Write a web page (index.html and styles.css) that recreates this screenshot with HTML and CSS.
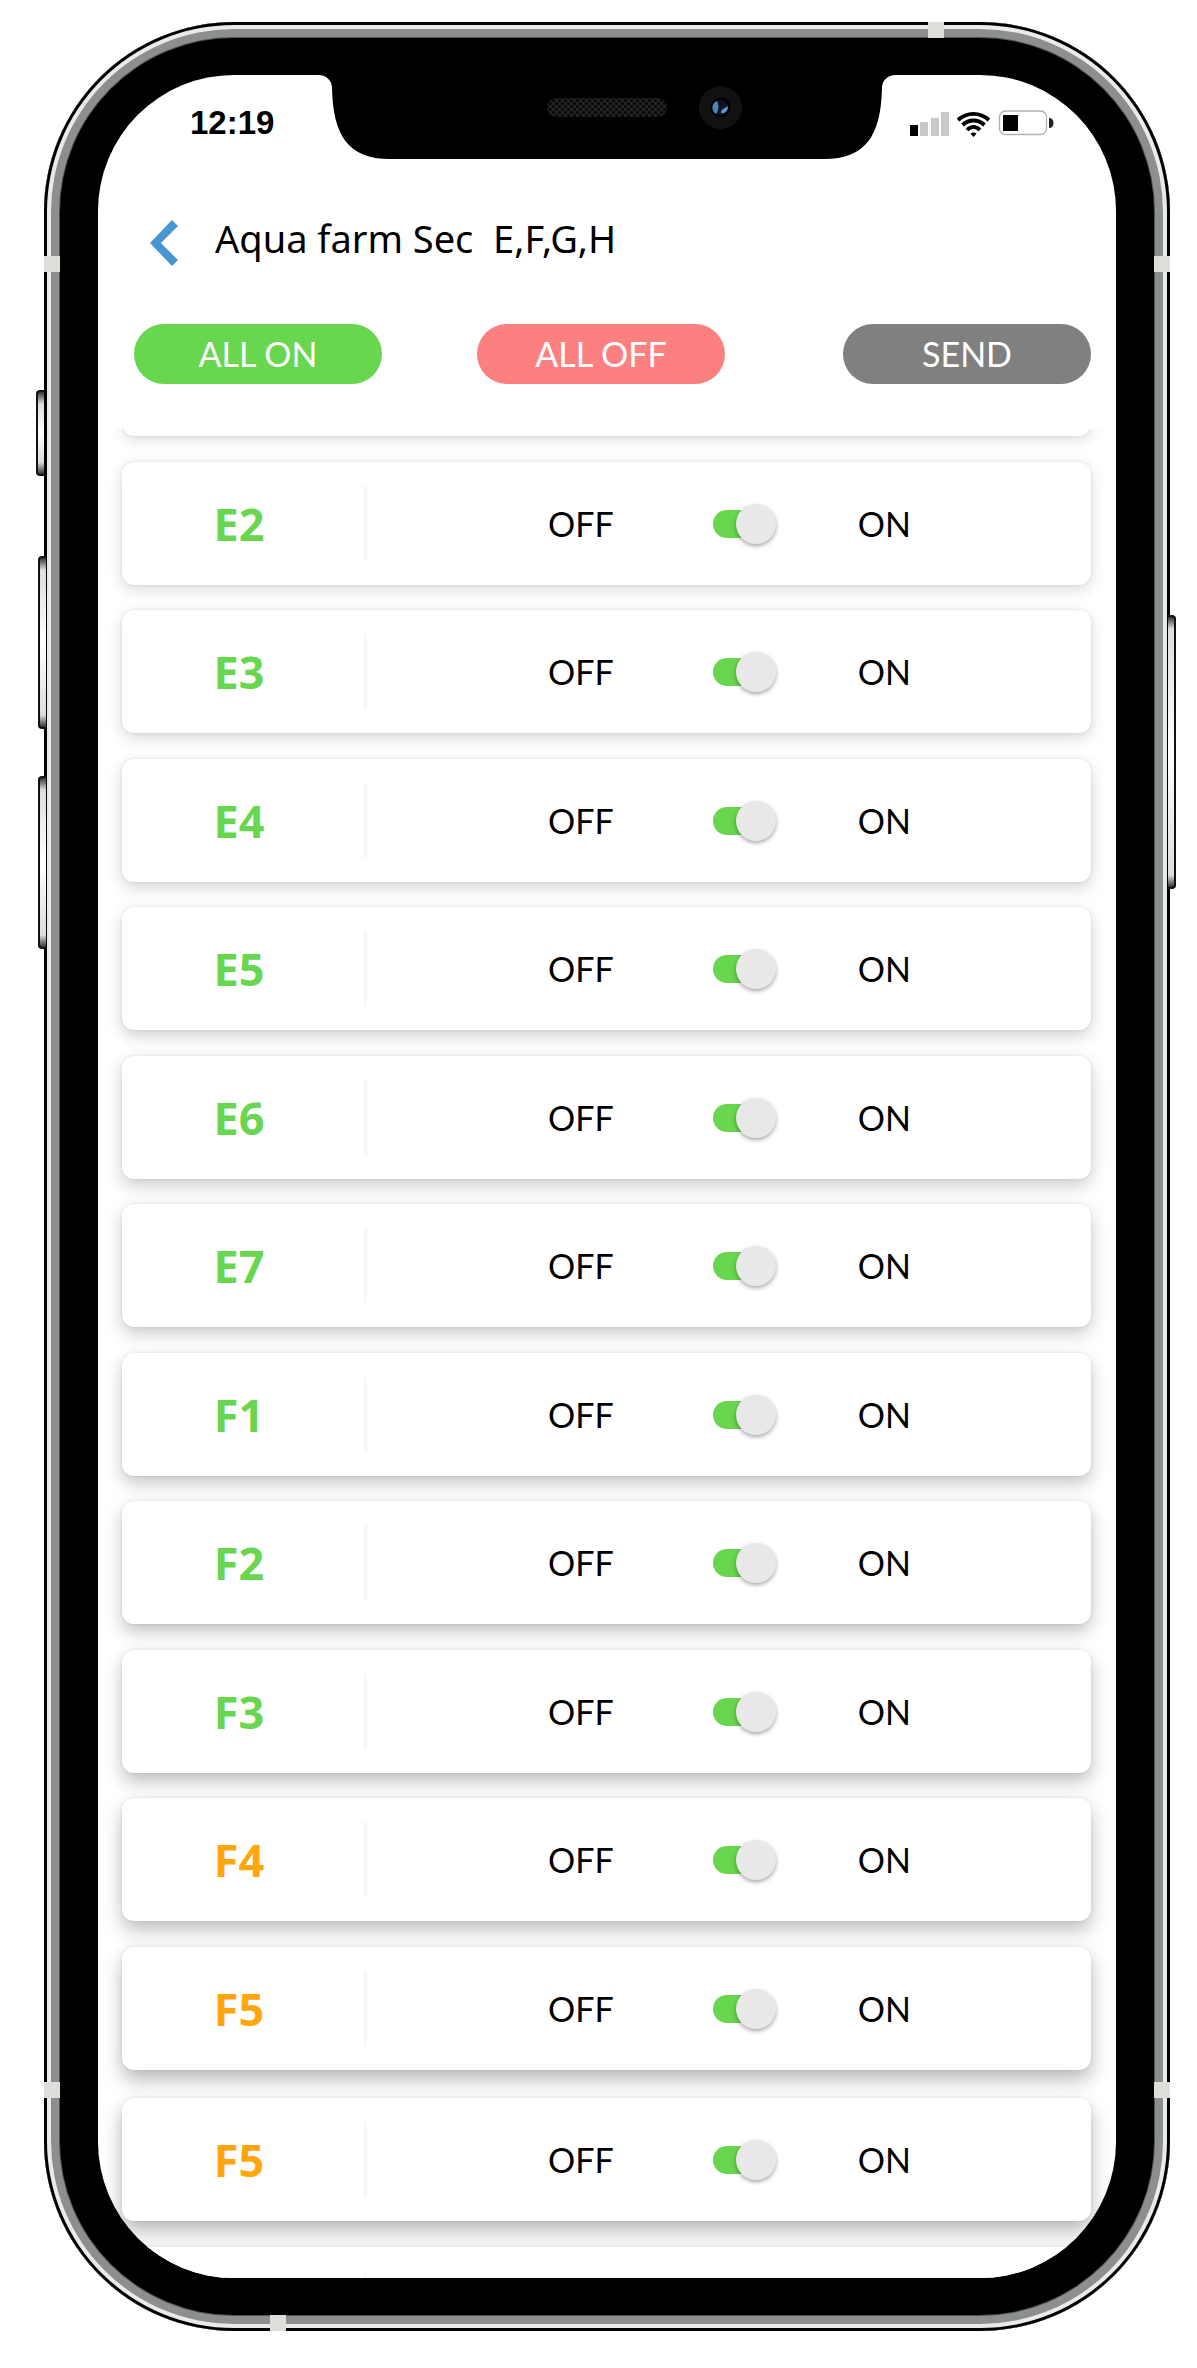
FILE: index.html
```html
<!DOCTYPE html>
<html lang="en">
<head>
<meta charset="utf-8">
<meta name="viewport" content="width=device-width, initial-scale=1">
<title>Aqua farm</title>
<link rel="stylesheet" href="styles.css">
</head>
<body>
<div class="phone">
  <span class="key key-mute"></span>
  <span class="key key-up"></span>
  <span class="key key-down"></span>
  <span class="key key-power"></span>
  <span class="band band-top"></span>
  <span class="band band-bottom"></span>
  <span class="band band-left-a"></span>
  <span class="band band-left-b"></span>
  <span class="band band-right-a"></span>
  <span class="band band-right-b"></span>
  <div class="screen">
    <svg class="notch" width="578" height="84" viewBox="0 0 578 84" aria-hidden="true">
      <defs>
        <pattern id="mesh" width="6" height="6" patternUnits="userSpaceOnUse">
          <rect width="6" height="6" fill="#222"/>
          <circle cx="1.5" cy="1.5" r="1.5" fill="#050505"/>
          <circle cx="4.500" cy="4.500" r="1.5" fill="#050505"/>
        </pattern>
      </defs>
      <path d="M0 0C9 0 14 6 14 13C15 60 30 84 72 84H506C548 84 563 60 564 13C564 6 569 0 578 0Z" fill="#000"/>
      <rect x="229" y="23" width="120" height="19" rx="9.500" fill="url(#mesh)"/>
      <circle cx="402.500" cy="32.500" r="21.500" fill="#111"/>
      <circle cx="402.500" cy="32.500" r="10" fill="#000"/>
      <circle cx="402.500" cy="32.500" r="7.500" fill="#0b1420"/>
      <path d="M399 26C393 28 393 36 398 39C401 36 401 30 399 26Z" fill="#4c86b8"/>
      <path d="M410 31C410 36 407 39 403 38C403 34 406 34 410 31Z" fill="#5a9bd0"/>
    </svg>
    <header class="top">
      <div class="status">
        <time class="clock">12:19</time>
        <svg class="indicators" width="144" height="28" viewBox="0 0 144 28" aria-hidden="true">
          <rect x="0" y="16" width="8" height="11" fill="#000"/>
          <g fill="#c8c8c8">
            <rect x="10" y="13" width="8" height="14"/>
            <rect x="21" y="9" width="8" height="18"/>
            <rect x="31" y="3" width="8" height="24"/>
          </g>
          <g fill="none" stroke="#000" stroke-width="3.800">
            <path d="M48 11C57 2.800 70 2.800 79 11"/>
            <path d="M52.500 16C59 10 68 10 74.500 16"/>
            <path d="M57 21C61 17 66 17 70 21"/>
          </g>
          <path d="M60.500 24.800C62.500 23.200 64.500 23.200 66.500 24.800L63.500 28Z" fill="#000"/>
          <rect x="89.500" y="2" width="47" height="23.500" rx="6" fill="none" stroke="#b0b0b0" stroke-width="1.300"/>
          <rect x="93" y="6" width="15" height="16" fill="#000"/>
          <path d="M139 9C142 9 143.500 11 143.500 14C143.500 17 142 19 139 19Z" fill="#222"/>
        </svg>
      </div>
      <div class="heading">
        <a class="back" href="#" aria-label="Back">
          <svg width="28" height="46" viewBox="0 0 28 46" aria-hidden="true"><path d="M0 23L22 0L28 6L11 23L28 40L22 46Z" fill="#4796d1"/></svg>
        </a>
        <h1 class="title">Aqua farm Sec  E,F,G,H</h1>
      </div>
      <div class="actions">
        <button class="pill pill-on" type="button">ALL ON</button>
        <button class="pill pill-off" type="button">ALL OFF</button>
        <button class="pill pill-send" type="button">SEND</button>
      </div>
    </header>
    <main class="list">
      <section class="card first" style="--i:0"></section>
      <section class="card" style="--i:1"><label class="name" for="s1">E2</label><div class="control"><span>OFF</span><input class="switch" type="checkbox" id="s1" checked><span>ON</span></div></section>
      <section class="card" style="--i:2"><label class="name" for="s2">E3</label><div class="control"><span>OFF</span><input class="switch" type="checkbox" id="s2" checked><span>ON</span></div></section>
      <section class="card" style="--i:3"><label class="name" for="s3">E4</label><div class="control"><span>OFF</span><input class="switch" type="checkbox" id="s3" checked><span>ON</span></div></section>
      <section class="card" style="--i:4"><label class="name" for="s4">E5</label><div class="control"><span>OFF</span><input class="switch" type="checkbox" id="s4" checked><span>ON</span></div></section>
      <section class="card" style="--i:5"><label class="name" for="s5">E6</label><div class="control"><span>OFF</span><input class="switch" type="checkbox" id="s5" checked><span>ON</span></div></section>
      <section class="card" style="--i:6"><label class="name" for="s6">E7</label><div class="control"><span>OFF</span><input class="switch" type="checkbox" id="s6" checked><span>ON</span></div></section>
      <section class="card" style="--i:7"><label class="name" for="s7">F1</label><div class="control"><span>OFF</span><input class="switch" type="checkbox" id="s7" checked><span>ON</span></div></section>
      <section class="card" style="--i:8"><label class="name" for="s8">F2</label><div class="control"><span>OFF</span><input class="switch" type="checkbox" id="s8" checked><span>ON</span></div></section>
      <section class="card" style="--i:9"><label class="name" for="s9">F3</label><div class="control"><span>OFF</span><input class="switch" type="checkbox" id="s9" checked><span>ON</span></div></section>
      <section class="card" style="--i:10"><label class="name pending" for="s10">F4</label><div class="control"><span>OFF</span><input class="switch" type="checkbox" id="s10" checked><span>ON</span></div></section>
      <section class="card" style="--i:11"><label class="name pending" for="s11">F5</label><div class="control"><span>OFF</span><input class="switch" type="checkbox" id="s11" checked><span>ON</span></div></section>
      <section class="card added" style="--i:12"><label class="name pending" for="s12">F5</label><div class="control"><span>OFF</span><input class="switch" type="checkbox" id="s12" checked><span>ON</span></div></section>
      <section class="card" style="--i:13"><div class="name"></div></section>
    </main>
  </div>
</div>
</body>
</html>
```
FILE: styles.css
```css
* { box-sizing: border-box; }

body {
  margin: 0;
  background: #fff;
  color: #000;
  font-family: Lato, "Noto Sans", sans-serif;
}

/* Device frame: outline, polished edge, grey rim, then the black bezel */
.phone {
  position: relative;
  margin: 22px 27px 37px 44px;
  padding: 53px 54px;
  aspect-ratio: 1126 / 2309;
  min-height: 0;
  border-radius: 190px;
  background: #000;
  box-shadow:
    inset 0 0 0 3px #000,
    inset 0 0 0 7px #e9ebea,
    inset 0 0 0 15px #8c8e8f,
    inset 0 0 0 16px #4c5254;
}

.key {
  position: absolute;
  width: 8px;
  border: 2px solid #111;
  background: linear-gradient(#333, #ddd 12px, #fff 50%, #ddd calc(100% - 12px), #333);
}
.key-mute, .key-up, .key-down { left: -6px; border-right: 0; border-radius: 4px 0 0 4px; }
.key-mute { left: -8px; top: 368px; height: 86px; }
.key-up { top: 534px; height: 173px; }
.key-down { top: 754px; height: 173px; }
.key-power { right: -6px; top: 593px; height: 274px; border-left: 0; border-radius: 0 4px 4px 0; }

.band { position: absolute; width: 16px; height: 16px; background: #dcdfd9; }
.band-top { top: 0; right: 226px; }
.band-bottom { bottom: 0; left: 226px; }
.band-left-a { left: 0; top: 234px; }
.band-left-b { left: 0; bottom: 233px; }
.band-right-a { right: 0; top: 234px; }
.band-right-b { right: 0; bottom: 233px; }

.screen {
  position: relative;
  display: flex;
  flex-direction: column;
  height: 100%;
  overflow: hidden;
  border-radius: 136px;
  background: #fff;
}

.notch { position: absolute; top: 0; left: calc(50% - 289px); }

.status {
  display: flex;
  justify-content: space-between;
  align-items: center;
  padding: 32px 62px 0 92px;
}
.clock { font: bold 33px/32px "Liberation Sans", Arial, sans-serif; }
.indicators { display: block; }

.heading {
  display: flex;
  gap: 37px;
  margin-top: 81px;
  padding-left: 52px;
  height: 46px;
}
.back, .back svg { display: block; }
.title {
  margin: 0;
  font-family: "Noto Sans", sans-serif;
  font-size: 38px;
  line-height: 36px;
  font-weight: 400;
  white-space: pre;
}

.actions {
  display: flex;
  gap: 95px;
  padding: 58px 25px 45px 36px;
}
.pill {
  width: 248px;
  height: 60px;
  padding: 0;
  border: 0;
  border-radius: 30px;
  color: #fff;
  font: 400 34px/60px Lato, "Noto Sans", sans-serif;
}
.pill-on { background: #68d64f; }
.pill-off { background: #fc8080; }
.pill-send { margin-left: auto; background: #808080; }

.list {
  flex: 1;
  min-height: 0;
  overflow: hidden;
  padding: 0 25px 0 24px;
}

.card {
  display: grid;
  grid-template-columns: 245px 1fr;
  align-items: center;
  height: 123px;
  margin-top: 25px;
  border-radius: 12px;
  background: #fff;
  box-shadow:
    0 0 3px rgba(0, 0, 0, .1),
    0 calc(4px + var(--i) * .5px) calc(14px + var(--i) * .5px) rgba(0, 0, 0, calc(.13 + var(--i) * .013));
}
.card:nth-child(even) { margin-top: 26px; }
.card.first { margin-top: -116px; }
.card.added { margin-top: 28px; }

.name {
  padding-right: 8px;
  text-align: center;
  color: #68d64f;
  font-family: "Noto Sans", sans-serif;
  font-size: 45px;
  line-height: 75px;
  min-height: 75px;
  font-weight: 700;
  border-right: 3px solid #f7f7f7;
}
.name.pending { color: #ffa60d; }

.control {
  display: flex;
  align-items: center;
  padding-left: 25%;
  font-size: 34px;
  line-height: 40px;
}

.switch {
  appearance: none;
  position: relative;
  width: 63px;
  height: 40px;
  margin: 0 82px 0 99px;
}
.switch::before {
  content: "";
  position: absolute;
  left: 0;
  top: 6px;
  width: 50px;
  height: 28px;
  border-radius: 14px;
  background: #68d64f;
}
.switch::after {
  content: "";
  position: absolute;
  right: 0;
  top: 0;
  width: 40px;
  height: 40px;
  border-radius: 50%;
  background: #e8e8e8;
  box-shadow: 0 2px 4px rgba(0, 0, 0, .35);
}
```
